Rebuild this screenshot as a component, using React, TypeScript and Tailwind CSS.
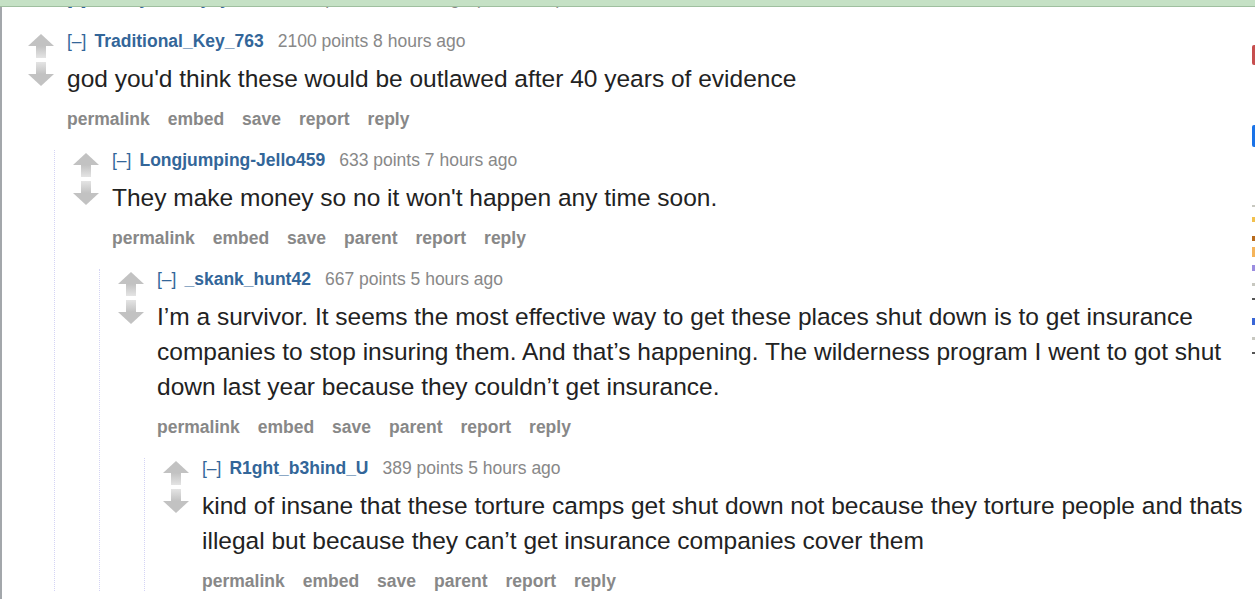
import React from "react";

interface CommentData {
  author: string;
  points: string;
  age: string;
  body: string;
  actions: string[];
  child?: CommentData;
}

const thread: CommentData = {
  author: "Traditional_Key_763",
  points: "2100 points",
  age: "8 hours ago",
  body: "god you'd think these would be outlawed after 40 years of evidence",
  actions: ["permalink", "embed", "save", "report", "reply"],
  child: {
    author: "Longjumping-Jello459",
    points: "633 points",
    age: "7 hours ago",
    body: "They make money so no it won't happen any time soon.",
    actions: ["permalink", "embed", "save", "parent", "report", "reply"],
    child: {
      author: "_skank_hunt42",
      points: "667 points",
      age: "5 hours ago",
      body: "I\u2019m a survivor. It seems the most effective way to get these places shut down is to get insurance companies to stop insuring them. And that\u2019s happening. The wilderness program I went to got shut down last year because they couldn\u2019t get insurance.",
      actions: ["permalink", "embed", "save", "parent", "report", "reply"],
      child: {
        author: "R1ght_b3hind_U",
        points: "389 points",
        age: "5 hours ago",
        body: "kind of insane that these torture camps get shut down not because they torture people and thats illegal but because they can\u2019t get insurance companies cover them",
        actions: ["permalink", "embed", "save", "parent", "report", "reply"],
      },
    },
  },
};

function Arrow({ down }: { down?: boolean }) {
  const id = down ? "gradDown" : "gradUp";
  return (
    <svg width="28" height="24" viewBox="0 0 28 24" className={down ? "rotate-180" : ""}>
      <defs>
        <linearGradient id={id} x1="0" y1="0" x2="0" y2="1">
          <stop offset="0%" stopColor="#c2c2c2" />
          <stop offset="100%" stopColor="#e4e4e4" />
        </linearGradient>
      </defs>
      <polygon points="14,0 1,12 27,12" fill="#c2c2c2" />
      <rect x="9" y="12" width="10" height="12" fill={`url(#${id})`} />
    </svg>
  );
}

function Comment({ c, nested }: { c: CommentData; nested?: boolean }) {
  return (
    <div
      className={
        nested
          ? "mt-[21px] ml-[45px] border-l border-dotted border-[#d4d4f4] pl-[17px]"
          : "pl-[18px]"
      }
    >
      <div className="flex">
        <div className="w-[28px] shrink-0 flex flex-col gap-[4px] pt-[3px]">
          <Arrow />
          <Arrow down />
        </div>
        <div className="ml-[12px] flex-1 min-w-0">
          <div className="h-[20px] leading-[20px] text-[17.5px] whitespace-nowrap">
            <span className="text-[#336699]">[–]</span>
            <span className="ml-[8px] font-bold text-[#336699]">{c.author}</span>
            <span className="ml-[14px] text-[#888888]">
              {c.points} {c.age}
            </span>
          </div>
          <div className="mt-[10px] text-[24.5px] leading-[35px] text-[#222222]">{c.body}</div>
          <div className="mt-[13px] h-[20px] leading-[20px] flex gap-[18px] text-[17.5px] font-bold text-[#888888]">
            {c.actions.map((a) => (
              <span key={a}>{a}</span>
            ))}
          </div>
        </div>
      </div>
      {c.child && (
        <div className="-ml-[18px]">
          <Comment c={c.child} nested />
        </div>
      )}
    </div>
  );
}

export default function App() {
  return (
    <div
      className="w-[1255px] h-[599px] overflow-hidden bg-white relative"
      style={{ fontFamily: '"Liberation Sans", Arial, sans-serif' }}
    >
      <div className="h-[7px] bg-[#c5e1c5] border-b border-[#9fbf9f]" />
      <div className="flex h-full">
        <div className="w-[2px] shrink-0 bg-[#a3a7ab]" />
        <div className="flex-1 min-w-0 pl-[7px]">
          <div className="h-[24px] overflow-hidden">
            <div className="-mt-[19px] ml-[58px] text-[17.5px] leading-[20px] whitespace-nowrap text-[#888888]">
              <span className="text-[#336699]">[–]</span>
              <span className="ml-[8px] font-bold text-[#336699]">Anonymously_yours</span>
              <span className="ml-[14px]">1423 points 9 hours ago (2 children)</span>
            </div>
          </div>
          <Comment c={thread} />
        </div>
        <div className="w-[3px] shrink-0 flex flex-col">
          <div className="mt-[38px] h-[20px] rounded-l-[2px] bg-[#c74f4f]" />
          <div className="mt-[60px] h-[22px] rounded-l-[2px] bg-[#1a73e8]" />
          <div className="mt-[58px] h-[2px] bg-[#c8c8c0]" />
          <div className="mt-[10px] h-[5px] bg-[#f2c14e]" />
          <div className="mt-[14px] h-[5px] bg-[#b86b1d]" />
          <div className="mt-[6px] h-[10px] bg-[#f5b45a]" />
          <div className="mt-[8px] h-[6px] bg-[#9b8de0]" />
          <div className="mt-[12px] h-[3px] bg-[#c8c8c0]" />
          <div className="mt-[12px] h-[2px] bg-[#555555]" />
          <div className="mt-[18px] h-[7px] bg-[#3a66d6]" />
          <div className="mt-[12px] h-[3px] bg-[#c8c8c0]" />
          <div className="mt-[12px] h-[2px] bg-[#555555]" />
        </div>
      </div>
    </div>
  );
}
